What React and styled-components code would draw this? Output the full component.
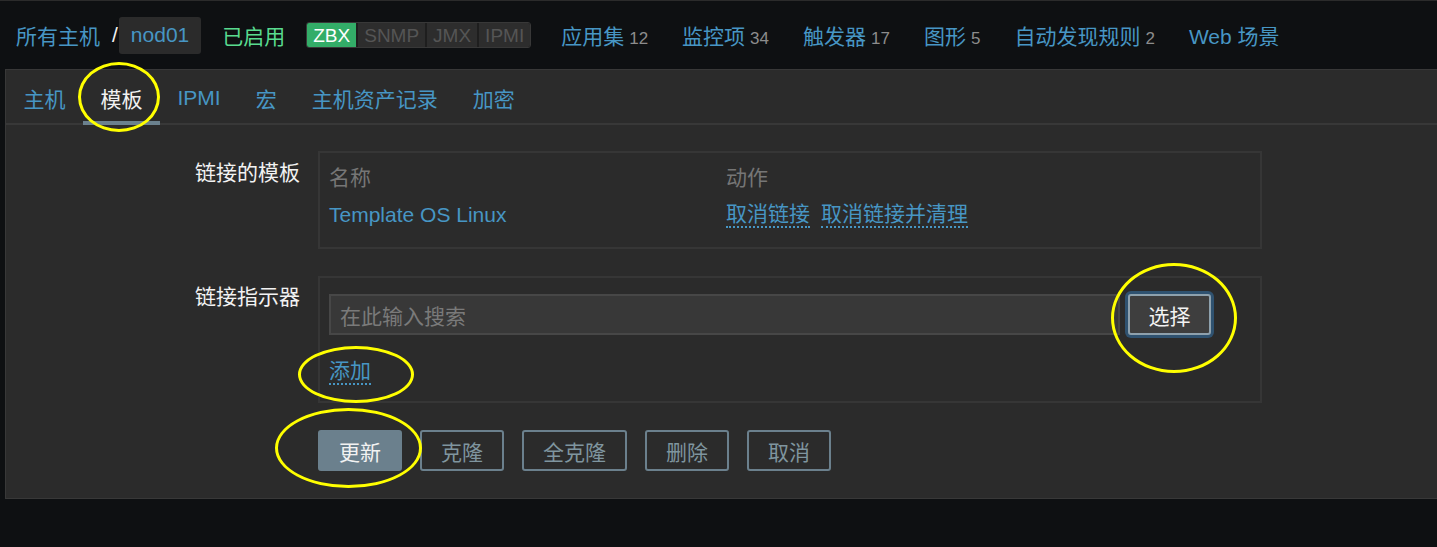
import React from "react";
import styled, { createGlobalStyle } from "styled-components";

const GlobalStyle = createGlobalStyle`
  html, body {
    margin: 0;
    padding: 0;
    background: #0e1012;
    overflow: hidden;
  }
  body {
    font-family: "Liberation Sans", Arial, "Noto Sans CJK SC", sans-serif;
    color: #f2f2f2;
  }
`;

const Page = styled.div`
  position: relative;
  width: 1437px;
  height: 547px;
  overflow: hidden;
  background: #0e1012;
`;

const Header = styled.header`
  display: flex;
  align-items: center;
  height: 68px;
  border-top: 1px solid #2b2b2b;
  padding-left: 16px;
  font-size: 21px;
  white-space: nowrap;
`;

const Link = styled.span`
  color: #4796c4;
`;

const Slash = styled.span`
  color: #f2f2f2;
  margin: 0 1px 0 12px;
`;

const HostBox = styled.span`
  display: flex;
  align-items: center;
  height: 37px;
  padding: 0 12px;
  background: #2b2b2b;
  border-radius: 3px;
  color: #4796c4;
`;

const Status = styled.span`
  color: #59db8f;
  margin-left: 21px;
`;

const Badges = styled.div`
  display: flex;
  margin-left: 21px;
  border: 1px solid #383838;
  border-radius: 3px;
  overflow: hidden;
`;

const Badge = styled.span`
  height: 24px;
  line-height: 25px;
  padding: 0 6px;
  font-size: 19px;
  background: ${(p) => (p.$on ? "#33ad68" : "#2d2d2d")};
  color: ${(p) => (p.$on ? "#ffffff" : "#555555")};
  border-left: ${(p) => (p.$first ? "none" : "2px solid #1e1e1e")};
`;

const Nav = styled.nav`
  display: flex;
  gap: 34px;
  margin-left: 30px;
`;

const NavItem = styled.span`
  display: flex;
  align-items: baseline;
  gap: 5px;
`;

const Count = styled.span`
  font-size: 17px;
  color: #8c8c8c;
`;

const Panel = styled.section`
  margin-left: 5px;
  width: 1460px;
  background: #2b2b2b;
  border: 1px solid #383838;
  padding-bottom: 27px;
`;

const Tabs = styled.div`
  display: flex;
  align-items: stretch;
  height: 53px;
  border-bottom: 2px solid #383838;
`;

const Tab = styled.span`
  display: flex;
  align-items: center;
  padding: 4px 17.5px 0;
  margin-bottom: -2px;
  font-size: 21px;
  color: ${(p) => (p.$active ? "#f2f2f2" : "#4796c4")};
  border-bottom: 4px solid ${(p) => (p.$active ? "#6b818e" : "transparent")};
`;

const Form = styled.div`
  display: grid;
  grid-template-columns: 294px 944px;
  column-gap: 18px;
  row-gap: 27px;
  padding-top: 26px;
  font-size: 21px;
`;

const Label = styled.div`
  text-align: right;
  line-height: 24px;
  padding-top: ${(p) => p.$top}px;
  color: #f2f2f2;
`;

const Box = styled.div`
  border: 2px solid #363636;
  padding: ${(p) => p.$pad};
`;

const Table = styled.div`
  display: grid;
  grid-template-columns: 397px 1fr;
`;

const Cell = styled.div`
  display: flex;
  align-items: center;
  gap: 11px;
  height: ${(p) => p.$h}px;
  color: ${(p) => (p.$head ? "#767676" : "#4796c4")};
`;

const Action = styled.span`
  color: #4796c4;
  line-height: 24px;
  border-bottom: 2px dotted #4796c4;
`;

const PickRow = styled.div`
  display: flex;
  align-items: center;
  gap: 8px;
`;

const Input = styled.div`
  box-sizing: border-box;
  width: 791px;
  height: 41px;
  display: flex;
  align-items: center;
  padding-left: 9px;
  background: #383838;
  border: 2px solid #474747;
  color: #7a7a7a;
`;

const SelectButton = styled.div`
  box-sizing: border-box;
  width: 83px;
  height: 41px;
  display: flex;
  align-items: center;
  justify-content: center;
  background: #3e3e3e;
  border: 2px solid #8ea1ad;
  border-radius: 3px;
  box-shadow: 0 0 0 3px #2f5270;
  color: #f2f2f2;
`;

const AddRow = styled.div`
  margin-top: 24px;
  display: flex;
`;

const Buttons = styled.div`
  display: flex;
  gap: 18px;
`;

const Button = styled.div`
  box-sizing: border-box;
  height: 41px;
  display: flex;
  align-items: center;
  padding: 0 19px;
  border-radius: 3px;
  border: 2px solid #6b808d;
  background: ${(p) => (p.$primary ? "#6b808d" : "transparent")};
  color: ${(p) => (p.$primary ? "#f2f2f2" : "#7f959f")};
`;

const Ring = styled.div`
  position: absolute;
  left: ${(p) => p.$x}px;
  top: ${(p) => p.$y}px;
  width: ${(p) => p.$w}px;
  height: ${(p) => p.$h}px;
  box-sizing: border-box;
  border: 3px solid #ffff00;
  border-radius: 50%;
  pointer-events: none;
`;

const navItems = [
  ["应用集", "12"],
  ["监控项", "34"],
  ["触发器", "17"],
  ["图形", "5"],
  ["自动发现规则", "2"],
  ["Web 场景", null],
];

const tabs = ["主机", "模板", "IPMI", "宏", "主机资产记录", "加密"];

export default function App() {
  return (
    <Page>
      <GlobalStyle />
      <Header>
        <Link>所有主机</Link>
        <Slash>/</Slash>
        <HostBox>nod01</HostBox>
        <Status>已启用</Status>
        <Badges>
          <Badge $on $first>ZBX</Badge>
          <Badge>SNMP</Badge>
          <Badge>JMX</Badge>
          <Badge>IPMI</Badge>
        </Badges>
        <Nav>
          {navItems.map(([name, count]) => (
            <NavItem key={name}>
              <Link>{name}</Link>
              {count && <Count>{count}</Count>}
            </NavItem>
          ))}
        </Nav>
      </Header>

      <Panel>
        <Tabs>
          {tabs.map((t) => (
            <Tab key={t} $active={t === "模板"}>
              {t}
            </Tab>
          ))}
        </Tabs>

        <Form>
          <Label $top={10}>链接的模板</Label>
          <Box $pad="7px 9px 9px">
            <Table>
              <Cell $head $h={32}>名称</Cell>
              <Cell $head $h={32}>动作</Cell>
              <Cell $h={46}>Template OS Linux</Cell>
              <Cell $h={46}>
                <Action>取消链接</Action>
                <Action>取消链接并清理</Action>
              </Cell>
            </Table>
          </Box>

          <Label $top={9}>链接指示器</Label>
          <Box $pad="16px 9px">
            <PickRow>
              <Input>在此输入搜索</Input>
              <SelectButton>选择</SelectButton>
            </PickRow>
            <AddRow>
              <Action>添加</Action>
            </AddRow>
          </Box>

          <div />
          <Buttons>
            <Button $primary>更新</Button>
            <Button>克隆</Button>
            <Button>全克隆</Button>
            <Button>删除</Button>
            <Button>取消</Button>
          </Buttons>
        </Form>
      </Panel>

      <Ring $x={78} $y={62} $w={82} $h={70} />
      <Ring $x={1111} $y={263} $w={126} $h={110} />
      <Ring $x={298} $y={346} $w={116} $h={57} />
      <Ring $x={275} $y={408} $w={147} $h={80} />
    </Page>
  );
}
